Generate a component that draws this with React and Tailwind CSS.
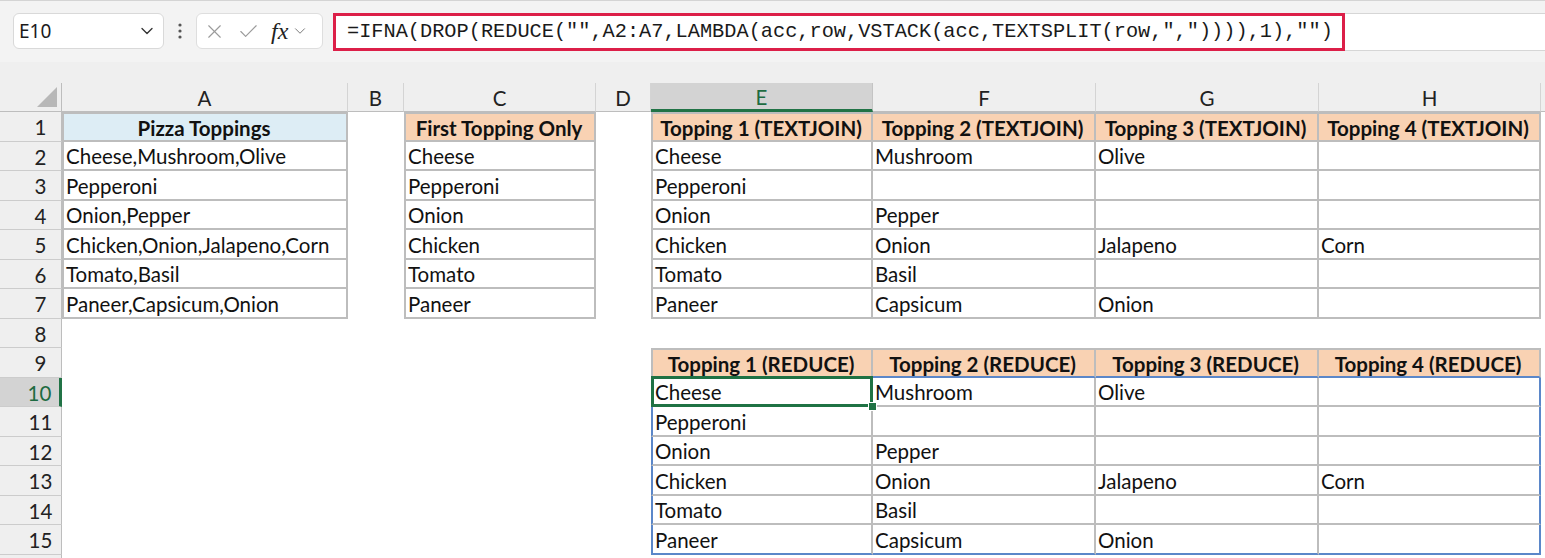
import React from 'react';
import { ChevronDown, X, Check } from 'lucide-react';

const COLS = [
  { key: 'A', w: 'w-[286px]' },
  { key: 'B', w: 'w-[56px]' },
  { key: 'C', w: 'w-[192px]' },
  { key: 'D', w: 'w-[55px]' },
  { key: 'E', w: 'w-[222px]' },
  { key: 'F', w: 'w-[223px]' },
  { key: 'G', w: 'w-[223px]' },
  { key: 'H', w: 'w-[222px]' },
];

const PIZZA = [
  'Cheese,Mushroom,Olive',
  'Pepperoni',
  'Onion,Pepper',
  'Chicken,Onion,Jalapeno,Corn',
  'Tomato,Basil',
  'Paneer,Capsicum,Onion',
];

const SPLIT_COLS = ['E', 'F', 'G', 'H'];

function cellInfo(r, col) {
  if (col === 'A' && r <= 7) {
    if (r === 1) return { text: 'Pizza Toppings', head: 'blue', firstRow: true, firstCol: true };
    return { text: PIZZA[r - 2], firstCol: true };
  }
  if (col === 'C' && r <= 7) {
    if (r === 1) return { text: 'First Topping Only', head: 'peach', firstRow: true, firstCol: true };
    return { text: PIZZA[r - 2].split(',')[0], firstCol: true };
  }
  const i = SPLIT_COLS.indexOf(col);
  if (i >= 0 && r <= 7) {
    if (r === 1) return { text: `Topping ${i + 1} (TEXTJOIN)`, head: 'peach', firstRow: true, firstCol: i === 0 };
    return { text: PIZZA[r - 2].split(',')[i] || '', firstCol: i === 0 };
  }
  if (i >= 0 && r >= 9 && r <= 15) {
    if (r === 9) return { text: `Topping ${i + 1} (REDUCE)`, head: 'peach', firstRow: true, firstCol: i === 0, blueBottom: true };
    return {
      text: PIZZA[r - 10].split(',')[i] || '',
      firstCol: i === 0,
      blueLeft: i === 0,
      blueRight: i === 3,
      blueBottom: r === 15,
      active: r === 10 && i === 0,
    };
  }
  return null;
}

function Cell({ r, col }) {
  const info = cellInfo(r, col.key);
  if (!info) return <div className={`${col.w} h-full shrink-0 bg-white`} />;

  const cls = [
    col.w,
    'h-full shrink-0 relative flex items-center pl-[2px] pr-[4px] pt-[3px] whitespace-nowrap',
    'border-r-2 border-b-2',
    info.blueRight ? 'border-r-[#5b87c9]' : 'border-r-[#bdbdbd]',
    info.blueBottom ? 'border-b-[#5b87c9]' : 'border-b-[#bdbdbd]',
  ];
  if (info.firstRow) cls.push('border-t-2 border-t-[#bdbdbd]');
  if (info.firstCol) cls.push('border-l-2', info.blueLeft ? 'border-l-[#5b87c9]' : 'border-l-[#bdbdbd]');
  if (info.head) {
    cls.push('justify-center font-bold', info.head === 'blue' ? 'bg-[#ddedf5]' : 'bg-[#f9d2b3]');
  } else {
    cls.push('bg-white');
  }
  if (info.active) cls.push('z-10');

  return (
    <div className={cls.join(' ')}>
      <span>{info.text}</span>
      {info.active && (
        <>
          <div className="absolute -left-[2px] -top-[2px] -right-[2px] -bottom-[2px] border-[3px] border-[#1f7244] pointer-events-none" />
          <div className="absolute -right-[6px] -bottom-[6px] w-[9px] h-[9px] bg-[#1f7244] border border-white" />
        </>
      )}
    </div>
  );
}

function Toolbar() {
  return (
    <div className="h-[62px] bg-[#f3f3f3] border-t border-[#d4d4d4] flex items-start pt-[12px] pl-[13px]">
      <div className="w-[151px] h-[36px] bg-white border border-[#d9d9d9] rounded-md flex items-center justify-between pl-[5px] pr-[6px]">
        <span className="text-[19px] text-[#1b1b1b] font-['Noto_Sans',sans-serif]">E10</span>
        <ChevronDown size={20} strokeWidth={1.6} className="text-[#333]" />
      </div>
      <div className="w-[32px] h-[36px] flex items-center justify-center">
        <svg width="4" height="16" viewBox="0 0 4 16">
          <circle cx="2" cy="2" r="1.6" fill="#555" />
          <circle cx="2" cy="8" r="1.6" fill="#555" />
          <circle cx="2" cy="14" r="1.6" fill="#555" />
        </svg>
      </div>
      <div className="w-[127px] h-[36px] bg-white border border-[#dedede] rounded-md flex items-center pl-[6px] gap-[11px]">
        <X size={23} strokeWidth={1.2} className="text-[#9b9b9b]" />
        <Check size={23} strokeWidth={1.2} className="text-[#9b9b9b]" />
        <div className="flex items-center gap-[3px]">
          <span className="italic text-[24px] leading-none text-[#222] font-['Liberation_Serif',serif]">fx</span>
          <ChevronDown size={18} strokeWidth={1.3} className="text-[#777]" />
        </div>
      </div>
      <div className="ml-[10px] flex-1 h-[38px] bg-white border-y border-[#d6d6d6] flex">
        <div className="w-[1012px] -my-[1px] border-[3px] border-[#dc1f48] flex items-center pl-[11px]">
          <span className="text-[20.3px] text-[#1a1a1a] whitespace-nowrap font-['Liberation_Mono',monospace]">
            {'=IFNA(DROP(REDUCE("",A2:A7,LAMBDA(acc,row,VSTACK(acc,TEXTSPLIT(row,",")))),1),"")'}
          </span>
        </div>
      </div>
    </div>
  );
}

function ColumnHeader() {
  return (
    <div className="h-[29px] flex bg-[#efefef]">
      <div className="w-[62px] shrink-0 h-full border-r border-b border-[#bdbdbd] relative">
        <svg className="absolute right-[4px] bottom-[4px]" width="20" height="20" viewBox="0 0 20 20">
          <polygon points="20,0 20,20 0,20" fill="#b8b8b8" />
        </svg>
      </div>
      {COLS.map((c) =>
        c.key === 'E' ? (
          <div key={c.key} className={`${c.w} shrink-0 h-full flex items-center justify-center pt-[2px] bg-[#d3d3d3] text-[#1e6b41] border-r border-r-[#c4c4c4] border-b-[3px] border-b-[#217346]`}>
            {c.key}
          </div>
        ) : (
          <div key={c.key} className={`${c.w} shrink-0 h-full flex items-center justify-center pt-[2px] text-[#222] border-r border-r-[#d4d4d4] border-b border-b-[#bdbdbd]`}>
            {c.key}
          </div>
        )
      )}
      <div className="flex-1 border-b border-[#bdbdbd]" />
    </div>
  );
}

function RowHeader({ r }) {
  const active = r === 10;
  return (
    <div
      className={`w-[62px] shrink-0 h-full flex items-center justify-center pl-[20px] pt-[3px] border-b border-b-[#cccccc] ${
        active
          ? 'bg-[#d3d3d3] text-[#1e6b41] border-r-[3px] border-r-[#217346]'
          : 'bg-[#efefef] text-[#222] border-r border-r-[#bdbdbd]'
      }`}
    >
      {r <= 15 ? r : ''}
    </div>
  );
}

export default function App() {
  const rows = Array.from({ length: 16 }, (_, i) => i + 1);
  return (
    <div className="w-[1545px] h-[558px] overflow-hidden bg-white">
      <Toolbar />
      <div className="h-[21px] bg-[#efefef]" />
      <div className="text-[20.5px] text-[#111] font-['Lato',sans-serif]">
        <ColumnHeader />
        {rows.map((r) => (
          <div key={r} className="h-[29.5px] flex">
            <RowHeader r={r} />
            {COLS.map((c) => (
              <Cell key={c.key} r={r} col={c} />
            ))}
            <div className="flex-1 bg-white" />
          </div>
        ))}
      </div>
    </div>
  );
}
